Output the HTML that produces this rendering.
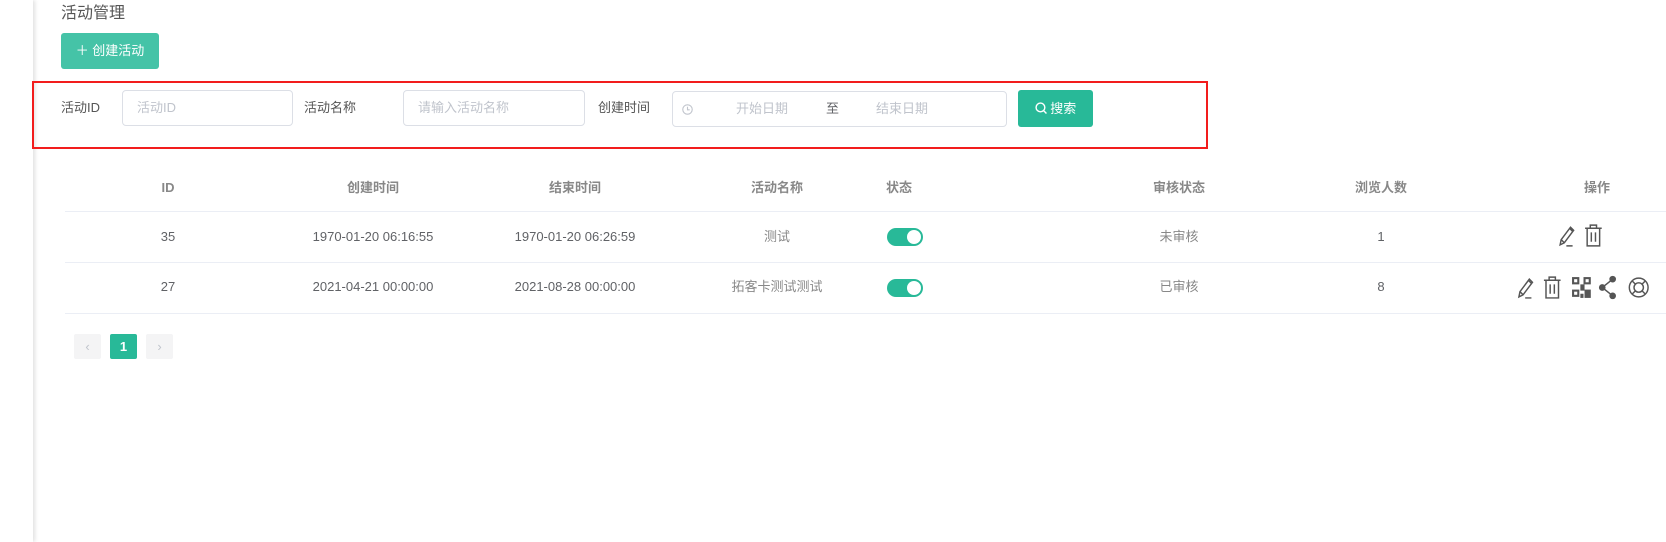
<!DOCTYPE html>
<html><head><meta charset="utf-8"><style>
body{margin:0;width:1666px;height:542px;background:#fff;font-family:"Liberation Sans","Noto Sans CJK SC",sans-serif;position:relative;overflow:hidden}
.a{position:absolute}
.side{left:0;top:0;width:33px;height:542px;background:#fff;box-shadow:2px 0 4px rgba(0,0,0,.12)}
.lbl{font-size:13px;color:#555;line-height:16px}
.inp{border:1px solid #dcdfe6;border-radius:4px;height:36px;box-sizing:border-box;font-size:13px;color:#c0c4cc;line-height:34px}
.th{font-size:13px;color:#888;font-weight:bold;transform:translateX(-50%);top:180px;line-height:16px}
.td{font-size:13px;color:#606266;transform:translateX(-50%);line-height:16px}
.line{left:65px;right:0;height:1px;background:#ebeef5}
.sw{width:36px;height:18px;border-radius:9px;background:#28b998}
.sw:after{content:"";position:absolute;right:2px;top:2px;width:14px;height:14px;border-radius:50%;background:#fff}
.pg{width:27px;height:25px;background:#f4f4f5;border-radius:2px;font-size:13px;color:#c0c4cc;text-align:center;line-height:25px;top:334px}
</style></head><body>
<div class="a side"></div>
<div class="a" style="left:61px;top:4px;font-size:16px;color:#555;line-height:20px">活动管理</div>
<div class="a" style="left:61px;top:33px;width:98px;height:36px;background:#45c3a7;border-radius:3px;color:#fff;font-size:13px;line-height:36px;text-align:center">＋ 创建活动</div>
<div class="a" style="left:32px;top:81px;width:1172px;height:64px;border:2px solid #f21d1d"></div>
<div class="a lbl" style="left:61px;top:100px">活动ID</div>
<div class="a inp" style="left:122px;top:90px;width:171px;padding-left:14px">活动ID</div>
<div class="a lbl" style="left:304px;top:100px">活动名称</div>
<div class="a inp" style="left:403px;top:90px;width:182px;padding-left:14px">请输入活动名称</div>
<div class="a lbl" style="left:598px;top:100px">创建时间</div>
<div class="a inp" style="left:672px;top:91px;width:335px">
<svg class="a" style="left:9px;top:12px" width="11" height="11" viewBox="0 0 10 10"><circle cx="5" cy="5" r="4.3" fill="none" stroke="#c0c4cc"/><path d="M5 2.5V5.3H7" fill="none" stroke="#c0c4cc"/></svg>
<span class="a" style="left:63px">开始日期</span><span class="a" style="left:153px;color:#606266">至</span><span class="a" style="left:203px">结束日期</span></div>
<div class="a" style="left:1018px;top:90px;width:75px;height:37px;background:#28b998;border-radius:3px;color:#fff;font-size:13px;line-height:37px;text-align:center">
<svg width="12" height="12" viewBox="0 0 11 11" style="vertical-align:-1px"><circle cx="5" cy="5" r="4" fill="none" stroke="#fff" stroke-width="1.3"/><path d="M8 8l2.5 2.5" stroke="#fff" stroke-width="1.3"/></svg> 搜索</div>

<div class="a th" style="left:168px">ID</div>
<div class="a th" style="left:373px">创建时间</div>
<div class="a th" style="left:575px">结束时间</div>
<div class="a th" style="left:777px">活动名称</div>
<div class="a th" style="left:899px">状态</div>
<div class="a th" style="left:1179px">审核状态</div>
<div class="a th" style="left:1381px">浏览人数</div>
<div class="a th" style="left:1597px">操作</div>
<div class="a line" style="top:211px"></div>
<div class="a line" style="top:262px"></div>
<div class="a line" style="top:313px"></div>

<div class="a td" style="left:168px;top:229px">35</div>
<div class="a td" style="left:373px;top:229px">1970-01-20 06:16:55</div>
<div class="a td" style="left:575px;top:229px">1970-01-20 06:26:59</div>
<div class="a td" style="left:777px;top:229px;color:#888">测试</div>
<div class="a sw" style="left:887px;top:228px"></div>
<div class="a td" style="left:1179px;top:229px;color:#888">未审核</div>
<div class="a td" style="left:1381px;top:229px">1</div>

<div class="a td" style="left:168px;top:279px">27</div>
<div class="a td" style="left:373px;top:279px">2021-04-21 00:00:00</div>
<div class="a td" style="left:575px;top:279px">2021-08-28 00:00:00</div>
<div class="a td" style="left:777px;top:279px;color:#888">拓客卡测试测试</div>
<div class="a sw" style="left:887px;top:279px"></div>
<div class="a td" style="left:1179px;top:279px;color:#888">已审核</div>
<div class="a td" style="left:1381px;top:279px">8</div>

<svg class="a" style="left:1557px;top:223px" width="52" height="25" viewBox="0 0 50 24" fill="none" stroke="#555" stroke-width="1.4">
<path d="M3 21l1-5L13 4l3 3-9 12zM4 16l3 3M12 5l3 3M9 22h6"/>
<path d="M27 5h16M32 5V2h6v3M29 5v17h12V5M33 9v9M37 9v9"/></svg>
<svg class="a" style="left:1515px;top:275px" width="137" height="25" viewBox="0 0 130 24" fill="none" stroke="#555" stroke-width="1.4">
<path d="M3 21l1-5L13 4l3 3-9 12zM4 16l3 3M12 5l3 3M9 22h6"/>
<path d="M27 5h16M32 5V2h6v3M29 5v17h12V5M33 9v9M37 9v9"/>
<g fill="#555" stroke="none"><rect x="54" y="2" width="7" height="7"/><rect x="65" y="2" width="7" height="7"/><rect x="54" y="14" width="7" height="7"/><rect x="62" y="9" width="4" height="6"/><rect x="66" y="14" width="6" height="8"/><rect x="62" y="18" width="3" height="4"/></g>
<g fill="#fff" stroke="none"><rect x="56" y="4" width="3" height="3"/><rect x="67" y="4" width="3" height="3"/><rect x="56" y="16" width="3" height="3"/></g>
<circle cx="93" cy="4" r="2.5" fill="#555"/><circle cx="83" cy="12" r="2.5" fill="#555"/><circle cx="93" cy="20" r="2.5" fill="#555"/><path d="M93 4l-10 8 10 8"/>
<circle cx="118" cy="12" r="9"/><circle cx="118" cy="12" r="4.5"/><path d="M112 6l3 3M124 6l-3 3M112 18l3-3M124 18l-3-3"/></svg>

<div class="a pg" style="left:74px">‹</div>
<div class="a pg" style="left:110px;background:#28b998;color:#fff;font-weight:bold">1</div>
<div class="a pg" style="left:146px">›</div>
</body></html>
